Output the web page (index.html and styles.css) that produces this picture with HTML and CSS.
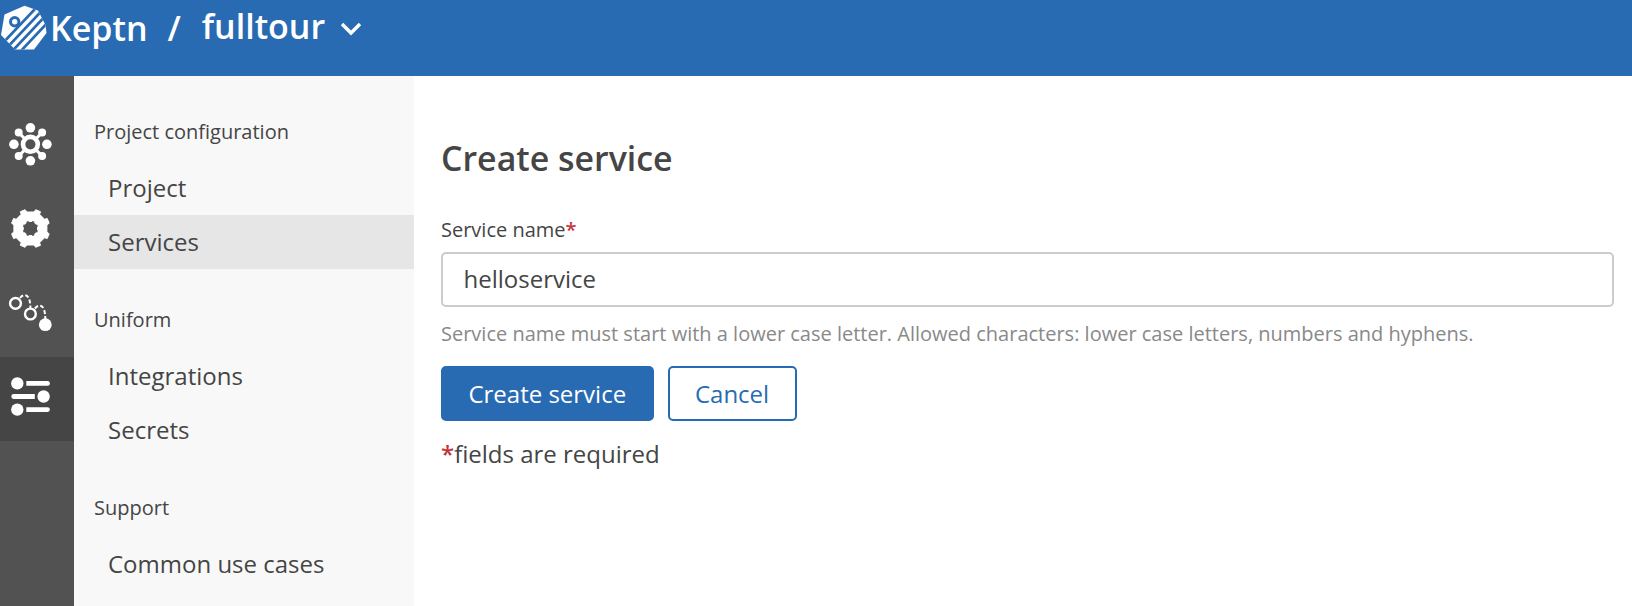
FILE: index.html
```html
<!DOCTYPE html>
<html lang="en">
<head>
<meta charset="utf-8">
<title>Keptn</title>
<link rel="stylesheet" href="styles.css">
</head>
<body>
<header class="topbar">
  <svg class="logo" viewBox="0 0 48 54" width="48" height="54">
    <defs><clipPath id="hex"><path d="M24.5 5.7 38 10.5 45.5 25 46.5 33 34 49.6H15L1 35 4.5 14.5Z"/></clipPath></defs>
    <g clip-path="url(#hex)">
      <rect width="48" height="54" fill="#fff"/>
      <path d="M43.5 0-7.500 54M52 0 1 54M60.500 0 9.500 54M69 0 18 54" stroke="#296bb2" stroke-width="2.700"/>
      <circle cx="14.7" cy="21.7" r="4.2" fill="#fff" stroke="#296bb2" stroke-width="3"/>
    </g>
  </svg>
  <span class="brand">Keptn</span>
  <span class="slash">/</span>
  <span class="project">fulltour</span>
  <svg class="chevron" viewBox="0 0 22 14" width="22" height="14"><path d="M2 2 11 11 20 2" fill="none" stroke="#fff" stroke-width="3.4"/></svg>
</header>
<div class="body">
  <nav class="rail">
    <a class="cell"><svg viewBox="0 0 74 84" width="74" height="84" fill="#fff" stroke="#fff">
      <circle cx="30.4" cy="39.3" r="7.4" fill="none" stroke-width="4.6"/>
      <path d="M18.7 27.6 24 33M42.1 27.6 36.8 33M18.7 51 24 45.6M42.1 51 36.8 45.6" stroke-width="3"/>
      <g stroke="none">
        <circle cx="30.4" cy="22.8" r="4.8"/><circle cx="30.4" cy="55.8" r="4.8"/><circle cx="13.9" cy="39.3" r="4.8"/><circle cx="46.9" cy="39.3" r="4.8"/>
        <circle cx="18.7" cy="27.6" r="4"/><circle cx="42.1" cy="27.6" r="4"/><circle cx="18.7" cy="51" r="4"/><circle cx="42.1" cy="51" r="4"/>
      </g></svg></a>
    <a class="cell"><svg viewBox="0 0 74 84" width="74" height="84">
      <defs><path id="gear" stroke-linejoin="round" d="M-3.6 -16.5H3.6L5.3 -18.8 10.1 -16.8 9.2 -14.2 14.2 -9.2 16.8 -10.1 18.8 -5.3 16.5 -3.6V3.6L18.8 5.3 16.8 10.1 14.2 9.2 9.2 14.2 10.1 16.8 5.3 18.8 3.6 16.5H-3.6L-5.3 18.8 -10.1 16.8 -9.2 14.2 -14.2 9.2 -16.8 10.1 -18.8 5.3 -16.5 3.6V-3.6L-18.8 -5.3 -16.8 -10.1 -14.2 -9.2 -9.2 -14.2 -10.1 -16.8 -5.3 -18.8Z"/></defs>
      <g transform="translate(30.4 39.5)">
        <use href="#gear" fill="#fff" stroke="#fff"/>
        <use href="#gear" fill="#525252" transform="scale(.4)"/>
      </g></svg></a>
    <a class="cell"><svg viewBox="0 0 74 84" width="74" height="84" fill="none" stroke="#fff" stroke-width="2.4">
      <circle cx="15.5" cy="30.4" r="5.4"/><circle cx="30.4" cy="41" r="5.4"/><circle cx="45.3" cy="51.7" r="6.4" fill="#fff" stroke="none"/>
      <path d="M20 25C24 20 30.4 20.5 30.4 35M34.9 35.5C39 30.5 45.3 31 45.3 46" stroke-width="2" stroke-dasharray="4 2.2"/></svg></a>
    <a class="cell active"><svg viewBox="0 0 74 84" width="74" height="84" fill="#fff">
      <circle cx="17.3" cy="26.4" r="6.2"/><circle cx="43.6" cy="39.5" r="6.2"/><circle cx="17.3" cy="52.6" r="6.2"/>
      <path d="M26.3 24H47.5a2.4 2.4 0 0 1 0 4.8H26.3ZM34.8 37.1H13.7a2.4 2.4 0 0 0 0 4.8H34.8ZM26.3 50.2H47.5a2.4 2.4 0 0 1 0 4.8H26.3Z"/></svg></a>
  </nav>
  <aside class="side">
    <section class="group"><h2>Project configuration</h2><a>Project</a><a class="current">Services</a></section>
    <section class="group"><h2>Uniform</h2><a>Integrations</a><a>Secrets</a></section>
    <section class="group"><h2>Support</h2><a>Common use cases</a></section>
  </aside>
  <main class="main">
    <h1>Create service</h1>
    <label class="label" for="name">Service name<span class="req">*</span></label>
    <input class="input" id="name" type="text" value="helloservice">
    <p class="hint">Service name must start with a lower case letter. Allowed characters: lower case letters, numbers and hyphens.</p>
    <div class="actions"><button class="btn primary">Create service</button><button class="btn">Cancel</button></div>
    <p class="note"><span class="req">*</span>fields are required</p>
  </main>
</div>
</body>
</html>
```
FILE: styles.css
```css
* { box-sizing: border-box; }
body { margin: 0; height: 606px; overflow: hidden; display: flex; flex-direction: column; font-family: "Open Sans", "Noto Sans", sans-serif; font-size: 24px; color: #454545; background: #fff; }
h1, h2, p { margin: 0; font-weight: 400; }
.topbar { height: 76px; flex: none; display: flex; align-items: flex-start; background: #296bb2; color: #fff; font-weight: 600; font-size: 34px; line-height: 54px; white-space: nowrap; }
.logo { flex: none; margin-right: 2px; }
.brand { padding-top: 1px; }
.slash { margin-left: 20px; padding-top: 1px; }
.project { margin-left: 21px; margin-top: -1px; }
.chevron { margin: 22px 0 0 15px; }
.body { flex: 1; display: flex; min-height: 0; }
.rail { width: 74px; flex: none; background: #525252; padding-top: 29px; }
.cell { display: block; height: 84px; }
.cell svg { display: block; }
.active { background: #454545; }
.side { width: 340px; flex: none; background: #f8f8f8; padding-top: 41px; }
.group { display: flex; flex-direction: column; margin-bottom: 36px; }
.group h2 { font-size: 20px; line-height: 30px; padding: 0 20px; margin-bottom: 14px; }
.group a { height: 54px; line-height: 54px; padding-left: 34px; }
.current { background: #e6e6e6; }
.main { flex: 1; display: flex; flex-direction: column; padding: 57px 18px 0 27px; }
.main h1 { font-size: 33.9px; font-weight: 600; line-height: 50px; margin-bottom: 32px; }
.label { font-size: 20px; line-height: 30px; margin-bottom: 7px; }
.req { color: #c4343c; font-weight: 600; }
.input { height: 55px; border: 2px solid #ccc; border-radius: 5px; padding: 0 21px 2px 20.5px; font: inherit; color: inherit; outline: none; }
.hint { font-size: 20px; line-height: 30px; margin-top: 12px; color: #898989; }
.actions { display: flex; gap: 14px; margin-top: 17px; }
.btn { height: 55px; padding: 0 25.4px; border: 2px solid #296bb2; border-radius: 5px; background: #fff; color: #296bb2; font: inherit; }
.primary { background: #296bb2; color: #fff; }
.note { line-height: 34px; margin-top: 16px; }
```
